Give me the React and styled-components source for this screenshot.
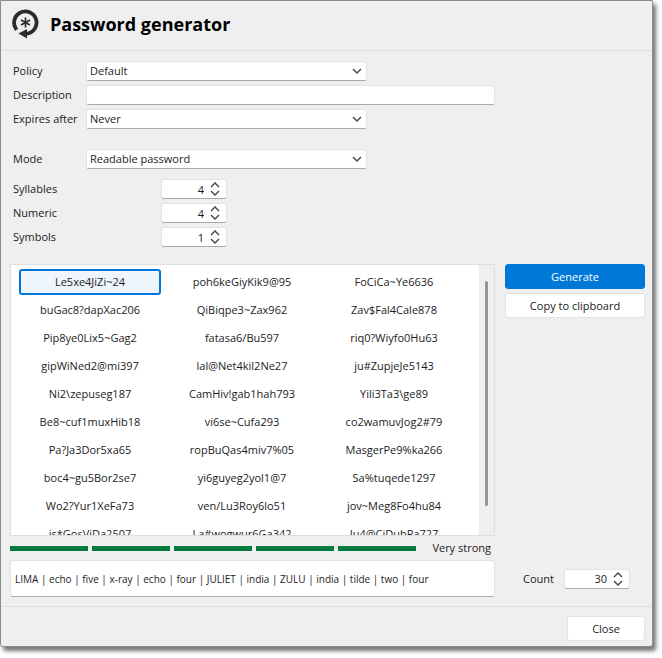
import React from "react";
import styled, { createGlobalStyle } from "styled-components";

const surface = "#efefef";
const line = "#dedede";
const edge = "#e3e3e3";
const blue = "#0078d7";
const green = "#007a3d";

const GlobalStyle = createGlobalStyle`
    * {
        box-sizing: border-box;
    }
    body {
        margin: 0;
        background: #fff;
        color: #1b1b1b;
        font-family: "Open Sans", "Noto Sans", sans-serif;
        font-size: 11px;
        line-height: 16px;
    }
    button, input, select {
        margin: 0;
        font: inherit;
        color: inherit;
    }
`;

const Dialog = styled.main`
    margin: 0 9px 10px 0;
    background: ${surface};
    border: 1px solid #8c8c8c;
    border-radius: 0 0 3px 3px;
    box-shadow: 3px 4px 4px rgba(0, 0, 0, 0.55);
`;

const Header = styled.header`
    display: flex;
    align-items: center;
    gap: 9px;
    height: 50px;
    padding: 0 10px 4px;
    border-bottom: 1px solid ${line};
`;

const Title = styled.h1`
    margin: 0;
    color: #000;
    font-size: 18px;
    font-weight: 700;
    line-height: 24px;
`;

const Body = styled.div`
    display: grid;
    grid-template-columns: 1fr 140px;
    column-gap: 10px;
    padding: 10px 7px 9px 9px;
`;

const Form = styled.form`
    grid-column: 1 / 3;
    display: flex;
    flex-direction: column;
    gap: 20px;
    margin: 0 150px 17px 0;
`;

const Group = styled.div`
    display: flex;
    flex-direction: column;
    gap: ${props => props.$gap ? props.$gap : "4px"};
`;

const Row = styled.div`
    display: grid;
    grid-template-columns: ${props => props.$spinner ? "148px 66px" : "73px 1fr"};
    align-items: center;
    padding-left: 3px;
`;

const Field = styled.div`
    display: flex;
    align-items: center;
    height: 20px;
    width: 100%;
    max-width: ${props => props.$width};
    background: #fff;
    border: 1px solid ${edge};
    border-bottom-color: #a9a9a9;
    border-radius: 3px;
`;

const SelectField = styled(Field)`
    display: grid;
    grid-template-columns: 1fr 18px;

    select {
        grid-area: 1 / 1 / 2 / 3;
        appearance: none;
        height: 18px;
        padding: 0 20px 0 3px;
        background: transparent;
        border: 0;
        outline: 0;
    }
    svg {
        grid-area: 1 / 2 / 2 / 3;
        justify-self: center;
        pointer-events: none;
    }
`;

const TextInput = styled.input`
    width: 100%;
    height: 20px;
    padding: 0 4px;
    background: #fff;
    border: 1px solid ${edge};
    border-bottom-color: #a9a9a9;
    border-radius: 3px;
    outline: 0;
`;

const SpellingInput = styled(TextInput)`
    height: 37px;
    font-size: 10px;
`;

const NumberInput = styled.input`
    flex: 1;
    min-width: 0;
    height: 18px;
    padding: 0 4px 0 0;
    text-align: right;
    background: transparent;
    border: 0;
    outline: 0;
    appearance: textfield;

    &::-webkit-inner-spin-button {
        display: none;
    }
`;

const Arrows = styled.div`
    display: flex;
    flex-direction: column;
    width: 14px;
    margin-right: 4px;
`;

const ArrowButton = styled.button`
    display: flex;
    justify-content: center;
    align-items: center;
    height: 8px;
    padding: 0;
    background: transparent;
    border: 0;
`;

const List = styled.section`
    grid-column: 1;
    display: flex;
    height: 272px;
    background: #fff;
    border: 1px solid ${line};
    overflow: hidden;
`;

const Passwords = styled.div`
    flex: 1;
    display: grid;
    grid-template-columns: repeat(3, 1fr);
    grid-auto-rows: 26px;
    gap: 2px 10px;
    padding: 4px 14px 0 8px;
`;

const Password = styled.button`
    padding: 0;
    background: ${props => props.$selected ? "#eef5fc" : "transparent"};
    border: 2px solid ${props => props.$selected ? blue : "transparent"};
    border-radius: 3px;
`;

const ScrollTrack = styled.div`
    display: flex;
    justify-content: center;
    width: 15px;
    padding: 16px 0 29px;
    background: ${surface};
`;

const ScrollThumb = styled.div`
    width: 3px;
    background: #959595;
    border-radius: 2px;
`;

const Side = styled.div`
    grid-column: 2;
    display: flex;
    flex-direction: column;
    gap: 4px;
`;

const Button = styled.button`
    height: 25px;
    min-width: 78px;
    padding: 0;
    color: ${props => props.$primary ? "#fff" : "#1b1b1b"};
    background: ${props => props.$primary ? blue : "#fff"};
    border: 1px solid ${props => props.$primary ? blue : edge};
    border-radius: 3px;
`;

const Strength = styled.div`
    grid-column: 1;
    display: flex;
    align-items: center;
    gap: 4px;
    height: 24px;
    padding-right: 4px;
`;

const Bar = styled.span`
    flex: 1;
    height: 5px;
    background: ${green};
`;

const StrengthText = styled.span`
    margin-left: 12px;
`;

const Spelling = styled.div`
    grid-column: 1;
`;

const Count = styled.div`
    grid-column: 2;
    display: grid;
    grid-template-columns: 41px 66px;
    align-items: center;
    padding-left: 18px;
`;

const Footer = styled.footer`
    display: flex;
    justify-content: flex-end;
    padding: 9px 7px 5px;
    border-top: 1px solid ${line};
`;

const passwords = [
    "Le5xe4JiZi~24", "poh6keGiyKik9@95", "FoCiCa~Ye6636",
    "buGac8?dapXac206", "QiBiqpe3~Zax962", "Zav$Fal4Cale878",
    "Pip8ye0Lix5~Gag2", "fatasa6/Bu597", "riq0?Wiyfo0Hu63",
    "gipWiNed2@mi397", "lal@Net4kil2Ne27", "ju#ZupjeJe5143",
    "Ni2\\zepuseg187", "CamHiv!gab1hah793", "Yili3Ta3\\ge89",
    "Be8~cuf1muxHib18", "vi6se~Cufa293", "co2wamuvJog2#79",
    "Pa?Ja3Dor5xa65", "ropBuQas4miv7%05", "MasgerPe9%ka266",
    "boc4~gu5Bor2se7", "yi6guyeg2yol1@7", "Sa%tuqede1297",
    "Wo2?Yur1XeFa73", "ven/Lu3Roy6lo51", "jov~Meg8Fo4hu84",
    "is*GosViDa2507", "La#wogwur6Ga342", "Ju4@CiDubPa727"
];

const Logo = () => (
    <svg width="30" height="32" viewBox="0 0 30 32" fill="none" aria-hidden="true">
        <path d="M5.7 21.7A11.2 11.2 0 1 1 15.5 25.7" stroke="#2b2b2b" strokeWidth="3.8" />
        <path d="M7.5 25.5L16 21V30.5Z" fill="#2b2b2b" />
        <path d="M14.5 9.5v10M10 12l9 5M19 12l-9 5" stroke="#2b2b2b" strokeWidth="1.7" />
    </svg>
);

const Chevron = ({ up }) => (
    <svg width="10" height="6" viewBox="0 0 10 6" fill="none" aria-hidden="true">
        <path d={up ? "M1 5L5 1L9 5" : "M1 1L5 5L9 1"} stroke="#444" strokeWidth="1.4" />
    </svg>
);

const Select = ({ id, label, value }) => (
    <Row>
        <label htmlFor={id}>{label}</label>
        <SelectField $width="281px">
            <select id={id} defaultValue={value}>
                <option>{value}</option>
            </select>
            <Chevron />
        </SelectField>
    </Row>
);

const Spinner = ({ id, label, start }) => {
    const [value, setValue] = React.useState(start);
    return (
        <>
            <label htmlFor={id}>{label}</label>
            <Field>
                <NumberInput
                    id={id}
                    type="number"
                    value={value}
                    onChange={e => setValue(Number(e.target.value))}
                />
                <Arrows>
                    <ArrowButton type="button" aria-label={`Increase ${label}`} onClick={() => setValue(value + 1)}>
                        <Chevron up />
                    </ArrowButton>
                    <ArrowButton type="button" aria-label={`Decrease ${label}`} onClick={() => setValue(Math.max(0, value - 1))}>
                        <Chevron />
                    </ArrowButton>
                </Arrows>
            </Field>
        </>
    );
};

const App = () => {
    const [selected, setSelected] = React.useState(0);

    return (
        <>
            <GlobalStyle />
            <Dialog>
                <Header>
                    <Logo />
                    <Title>Password generator</Title>
                </Header>
                <Body>
                    <Form>
                        <Group>
                            <Select id="policy" label="Policy" value="Default" />
                            <Row>
                                <label htmlFor="description">Description</label>
                                <TextInput id="description" type="text" />
                            </Row>
                            <Select id="expires" label="Expires after" value="Never" />
                        </Group>
                        <Group $gap="10px">
                            <Select id="mode" label="Mode" value="Readable password" />
                            <Group>
                                <Row $spinner><Spinner id="syllables" label="Syllables" start={4} /></Row>
                                <Row $spinner><Spinner id="numeric" label="Numeric" start={4} /></Row>
                                <Row $spinner><Spinner id="symbols" label="Symbols" start={1} /></Row>
                            </Group>
                        </Group>
                    </Form>
                    <List>
                        <Passwords>
                            {passwords.map((password, i) => (
                                <Password
                                    key={password}
                                    type="button"
                                    $selected={i === selected}
                                    aria-pressed={i === selected}
                                    onClick={() => setSelected(i)}
                                >
                                    {password}
                                </Password>
                            ))}
                        </Passwords>
                        <ScrollTrack><ScrollThumb /></ScrollTrack>
                    </List>
                    <Side>
                        <Button type="button" $primary>Generate</Button>
                        <Button type="button">Copy to clipboard</Button>
                    </Side>
                    <Strength>
                        {[1, 2, 3, 4, 5].map(n => <Bar key={n} />)}
                        <StrengthText>Very strong</StrengthText>
                    </Strength>
                    <Spelling>
                        <SpellingInput
                            type="text"
                            aria-label="Spelling"
                            readOnly
                            value="LIMA | echo | five | x-ray | echo | four | JULIET | india | ZULU | india | tilde | two | four"
                        />
                    </Spelling>
                    <Count>
                        <Spinner id="count" label="Count" start={30} />
                    </Count>
                </Body>
                <Footer>
                    <Button type="button">Close</Button>
                </Footer>
            </Dialog>
        </>
    );
};

export default App;
